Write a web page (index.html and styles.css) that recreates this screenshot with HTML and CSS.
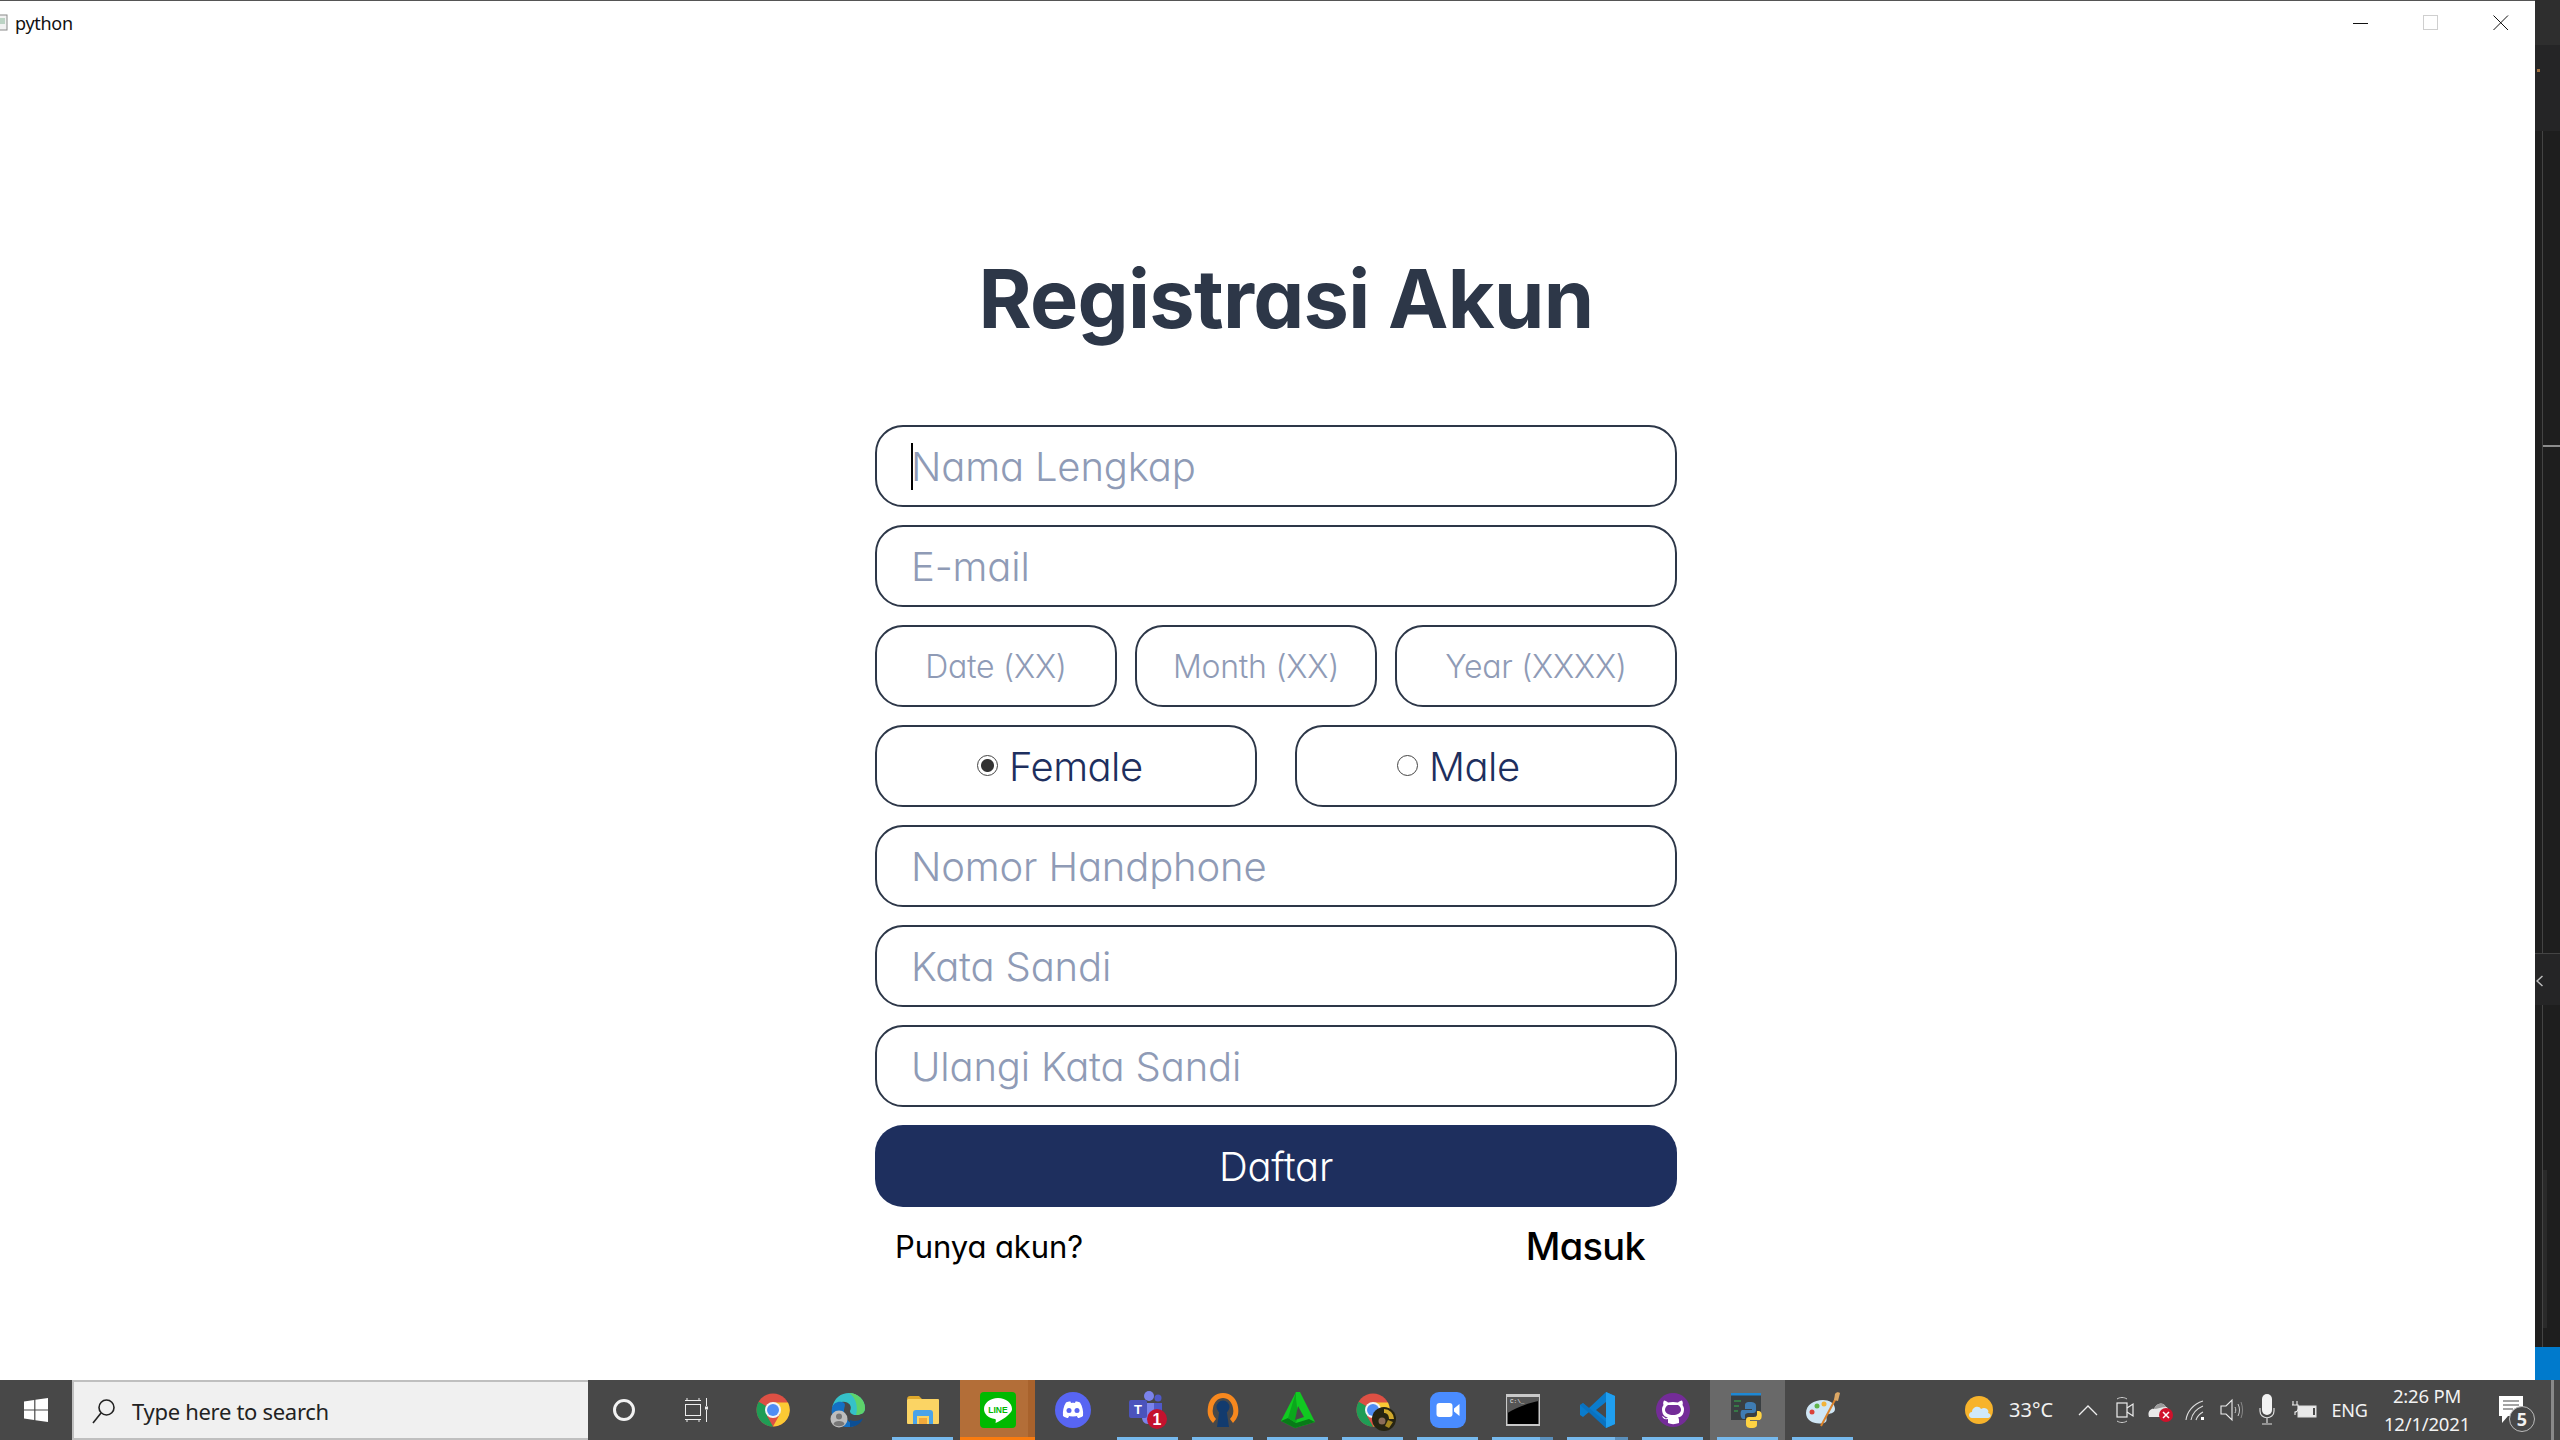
FILE: index.html
```html
<!DOCTYPE html>
<html lang="id">
<head>
<meta charset="utf-8">
<title>Registrasi Akun</title>
<link rel="stylesheet" href="styles.css">
</head>
<body>
<svg class="defs" width="0" height="0" aria-hidden="true">
  <defs>
    <symbol id="chrome" viewBox="0 0 36 36">
      <circle cx="18" cy="18" r="16.5" fill="#dd5044"/>
      <path d="M18 18 L6.5 29.8 A16.5 16.5 0 0 1 3.7 9.8 L18 18Z M3.7 9.8 L12 24 L18 34.5 A16.5 16.5 0 0 1 3.7 9.8Z" fill="#1f9d55"/>
      <path d="M18 10.5 H33 A16.5 16.5 0 0 1 18 34.5 L25 22Z" fill="#fbc934"/>
      <circle cx="18" cy="18" r="8" fill="#f4f4f4"/>
      <circle cx="18" cy="18" r="6" fill="#4f8df5"/>
    </symbol>
  </defs>
</svg>
<div class="screen">
  <div class="desktop">
    <main class="window">
      <header class="titlebar">
        <span class="app">
          <svg class="app-icon" width="8" height="18" viewBox="0 0 8 18"><rect x="-6" y="1" width="13" height="15" fill="#f2f2f2" stroke="#8a8a8a"/><rect x="0" y="4" width="5" height="6" fill="#bcd3c4"/></svg>
          <span class="app-name">python</span>
        </span>
        <span class="controls">
          <svg width="16" height="16" viewBox="0 0 16 16"><path d="M0 8.5H15" stroke="#111" stroke-width="1"/></svg>
          <svg width="16" height="16" viewBox="0 0 16 16"><rect x="0.5" y="0.5" width="14" height="14" fill="none" stroke="#cfcfcf"/></svg>
          <svg width="16" height="16" viewBox="0 0 16 16"><path d="M0.5 0.5L15 15M15 0.5L0.5 15" stroke="#111" stroke-width="1"/></svg>
        </span>
      </header>
      <section class="content">
        <h1 class="heading">Registrasi Akun</h1>
        <form class="form">
          <div class="with-caret">
            <input class="field" type="text" placeholder="Nama Lengkap">
            <span class="caret"></span>
          </div>
          <input class="field" type="text" placeholder="E-mail">
          <div class="row">
            <input class="field small date" type="text" placeholder="Date (XX)">
            <input class="field small date" type="text" placeholder="Month (XX)">
            <input class="field small year" type="text" placeholder="Year (XXXX)">
          </div>
          <div class="row gender">
            <label class="choice"><input class="radio" type="radio" name="g" checked>Female</label>
            <label class="choice"><input class="radio" type="radio" name="g">Male</label>
          </div>
          <input class="field" type="text" placeholder="Nomor Handphone">
          <input class="field" type="password" placeholder="Kata Sandi">
          <input class="field" type="password" placeholder="Ulangi Kata Sandi">
          <button class="submit" type="button">Daftar</button>
          <div class="foot">
            <span class="foot-q">Punya akun?</span>
            <a class="foot-link">Masuk</a>
          </div>
        </form>
      </section>
    </main>
    <aside class="editor">
      <div class="ed-title"></div>
      <div class="ed-tabs"><span class="dot"></span></div>
      <div class="ed-pane1"><div class="ed-split"></div></div>
      <div class="ed-bar"><svg width="7" height="14" viewBox="0 0 7 14"><path d="M6.500 2L1 7L6.500 12" fill="none" stroke="#bdbdbd" stroke-width="1.500"/></svg></div>
      <div class="ed-pane2"><div class="ed-thumb"></div></div>
      <div class="ed-status"></div>
    </aside>
  </div>
  <footer class="taskbar">
    <div class="start">
      <svg width="24" height="24" viewBox="0 0 24 24"><path d="M0 3.4L10.2 2V11.4H0ZM11.4 1.8L24 0V11.4H11.4ZM0 12.6H10.2V22L0 20.6ZM11.4 12.6H24V24L11.4 22.2Z" fill="#fff"/></svg>
    </div>
    <div class="search">
      <svg width="24" height="26" viewBox="0 0 24 26"><circle cx="14.5" cy="9.5" r="7.5" fill="none" stroke="#222" stroke-width="1.6"/><path d="M9 15L1 25" stroke="#222" stroke-width="1.6"/></svg>
      <span class="search-text">Type here to search</span>
    </div>
    <div class="cell sys">
      <svg width="24" height="24" viewBox="0 0 24 24"><circle cx="12" cy="12" r="9.5" fill="none" stroke="#f2f2f2" stroke-width="3"/></svg>
    </div>
    <div class="cell sys narrow">
      <svg width="24" height="26" viewBox="0 0 24 26"><path d="M1 3.5H17M3 1V3.5M15 1V3.5M1 22.5H17M3 25V22.5M15 25V22.5" stroke="#eee" fill="none"/><rect x="1.5" y="7.5" width="15" height="11" fill="none" stroke="#eee"/><path d="M22.5 1V9M22.5 13V25" stroke="#eee"/><rect x="21" y="9.5" width="3" height="3" fill="#eee"/></svg>
    </div>

    <div class="cell"><svg class="ic"><use href="#chrome"/></svg></div>

    <div class="cell"><svg class="ic" viewBox="0 0 36 36">
      <path d="M2 16C4 6 11 1 19 1C28 1 35 8 35 16C35 21 31 23 26 23C22 23 20 21 20 19C23 14 18 9 12 10C7 11 3 13 2 16Z" fill="#35c1c9"/>
      <path d="M19 1C28 1 35 8 35 16C35 21 31 23 26 23C28 17 27 6 19 1Z" fill="#5ed36a"/>
      <path d="M2 16C3 11 8 9 12 10C17 11 14 15 14 19C14 26 20 33 27 32C24 35 20 35 18 35C8 35 0 27 2 16Z" fill="#1470c4"/>
      <path d="M20 28C24 30 30 29 33 26C31 31 28 34 20 35Z" fill="#0c4f95"/>
      <circle cx="9" cy="27" r="8.5" fill="#bdbdbd"/><circle cx="9" cy="24.5" r="3" fill="#777"/><path d="M3.5 32C4 28 14 28 14.5 32C12 35 6 35 3.5 32Z" fill="#777"/>
    </svg></div>

    <div class="cell"><svg class="ic" viewBox="0 0 36 36">
      <path d="M2 8C2 5 3 4 5 4H14L17 7H2Z" fill="#e0a92b"/>
      <rect x="2" y="7" width="32" height="25" rx="1" fill="#fbd464"/>
      <path d="M8 32V21C8 19 9 18 11 18H25C27 18 28 19 28 21V32H24V24H12V32Z" fill="#4aa3e8"/>
      <rect x="14" y="26" width="8" height="6" fill="#f2a93b"/>
    </svg><i class="mark"></i></div>

    <div class="cell line"><svg class="ic" viewBox="0 0 36 36">
      <rect width="36" height="36" rx="4" fill="#00b900"/>
      <path d="M18 6C10 6 4 11 4 17C4 22 8 26 15 27C16 27 16 29 15.5 31C20 29 27 25 30 21C31.5 19.5 32 18.5 32 17C32 11 26 6 18 6Z" fill="#fff"/>
      <text class="line-word" x="18" y="21" text-anchor="middle">LINE</text>
    </svg><i class="mark-line"></i></div>

    <div class="cell"><svg class="ic" viewBox="0 0 36 36">
      <circle cx="18" cy="18" r="18" fill="#5865f2"/>
      <path d="M11 10.5C13 9.5 15 9.2 15.5 9.5L16 11C17.5 10.8 18.5 10.8 20 11L20.5 9.5C21 9.2 23 9.5 25 10.5C27.5 14.5 28.5 19 28 24C26 25.5 24 26 23 26L21.8 24C22.5 23.8 23.5 23.3 24 23C20 25 16 25 12 23C12.5 23.3 13.5 23.8 14.2 24L13 26C12 26 10 25.5 8 24C7.5 19 8.5 14.5 11 10.5Z" fill="#fff"/>
      <circle cx="14" cy="18.5" r="2.5" fill="#5865f2"/><circle cx="22" cy="18.5" r="2.5" fill="#5865f2"/>
    </svg></div>

    <div class="cell"><svg class="ic tall" viewBox="0 0 40 40">
      <circle cx="21" cy="6" r="5" fill="#7b83eb"/><circle cx="30" cy="8" r="3.5" fill="#5059c9"/>
      <path d="M14 13H26V27C26 32 22 34 20 34C16 34 14 31 14 27Z" fill="#7b83eb"/>
      <path d="M26 13H34V24C34 28 30 29 26 28Z" fill="#5059c9"/>
      <rect x="1" y="10" width="18" height="18" rx="2" fill="#4b53bc"/>
      <text class="teams-t" x="10" y="24" text-anchor="middle">T</text>
      <circle cx="29" cy="29" r="10" fill="#c4122e"/>
      <text class="teams-n" x="29" y="35" text-anchor="middle">1</text>
    </svg><i class="mark"></i></div>

    <div class="cell"><svg class="ic" viewBox="0 0 36 36">
      <path d="M8 31C3 26 2 21 3 15C4 7 10 1 18 1C26 1 32 7 33 15C34 21 33 26 28 31L25 27C28 24 29 20 28 16C27 10 23 6 18 6C13 6 9 10 8 16C7 20 8 24 11 27Z" fill="#f7881e"/>
      <circle cx="18" cy="15" r="6.5" fill="#123b6e"/><path d="M14.5 18H21.5L24 35H12Z" fill="#123b6e"/>
    </svg><i class="mark"></i></div>

    <div class="cell"><svg class="ic" viewBox="0 0 36 36">
      <path d="M16 0L20 0L35 30L15 36L1 29Z" fill="#11c921"/>
      <path d="M1 29L15 36L35 30L29 27L16 31L8 26Z" fill="#087a18"/>
      <path d="M16 0L8 26L16 31L18 23L16 7Z" fill="#0aa81c"/>
      <path d="M18 14L24 25L15 28Z" fill="#484848"/>
    </svg><i class="mark"></i></div>

    <div class="cell"><svg class="ic"><use href="#chrome"/></svg><svg class="ic-over" width="24" height="24" viewBox="0 0 24 24"><circle cx="12" cy="12" r="12" fill="#262412"/><path d="M12 2A10 10 0 0 1 22 12H17C17 8 15 6 12 6Z" fill="#d1a92c"/><path d="M21 15L17 21L13 19L16 13Z" fill="#a58821"/><circle cx="10" cy="14" r="3.5" fill="#8a6c58"/></svg><i class="mark"></i></div>

    <div class="cell"><svg class="ic" viewBox="0 0 36 36">
      <rect width="36" height="36" rx="9" fill="#4a8cff"/>
      <rect x="6.5" y="11" width="16" height="14" rx="3" fill="#fff"/>
      <path d="M24 16.5L29.5 12V24L24 19.5Z" fill="#fff"/>
    </svg><i class="mark"></i></div>

    <div class="cell"><svg class="ic" viewBox="0 0 36 36">
      <rect x="1" y="2" width="34" height="32" fill="#c9c9c9"/>
      <rect x="2.5" y="5" width="31" height="27" fill="#000"/>
      <path d="M2.5 5H33.5V9C24 11 12 15 2.5 21Z" fill="#555"/>
      <text class="cmd-word" x="5" y="11">C:\_</text>
    </svg><i class="mark split"></i></div>

    <div class="cell"><svg class="ic" viewBox="0 0 36 36">
      <path d="M26 0L35 4V32L26 36L9 20L3 25L0 23V13L3 11L9 16Z" fill="#0a7ccd"/>
      <path d="M26 0L35 4V32L26 36Z" fill="#1f9ff0"/>
      <path d="M26 10L16 18L26 26Z" fill="#484848"/>
      <path d="M3 11L26 30V36L0 13Z" fill="#0a6cb8" opacity=".6"/>
    </svg><i class="mark split"></i></div>

    <div class="cell"><svg class="ic" viewBox="0 0 36 36">
      <circle cx="18" cy="18" r="17" fill="#742c98"/>
      <path d="M13 31V27C9 28 8 26 7 24C8 24 9 25 10 26C11 27 12 26 13 25.5C10 25 7 23 7 17C7 15 8 14 8.5 13C8 12 8 10 9 8.5C10.5 8.5 12 9.5 13 10.5C16 9.7 20 9.7 23 10.5C24 9.5 25.5 8.5 27 8.5C28 10 28 12 27.5 13C28 14 29 15 29 17C29 23 26 25 23 25.5C24 26.5 24 27.5 24 29V31C20 32.5 16 32.5 13 31Z" fill="#fff"/>
      <path d="M13 13H23C25 14 26 16 26 18C26 21 22 23 18 23C14 23 10 21 10 18C10 16 11 14 13 13Z" fill="#742c98"/>
    </svg><i class="mark"></i></div>

    <div class="cell active"><svg class="ic" viewBox="0 0 36 36">
      <rect x="1" y="1" width="30" height="27" fill="#3a3f42"/>
      <rect x="1" y="1" width="30" height="2.5" fill="#1e88d4"/>
      <path d="M4 9H11M4 14H9M4 19H8" stroke="#35b24d" stroke-width="1"/>
      <path d="M20 10C15 10 15 12 15 14V17H22V18H12C10 18 10 27 13 27H15V24C15 21 17 21 20 21H23C25 21 26 20 26 18V14C26 11 24 10 20 10Z" fill="#3f7cb3"/>
      <path d="M21 36C27 36 27 34 27 32V29H20V28H30C32 28 33 19 29 19H27V22C27 25 25 25 22 25H19C17 25 16 26 16 28V32C16 35 18 36 21 36Z" fill="#ffd343"/>
    </svg><i class="mark"></i></div>

    <div class="cell"><svg class="ic" viewBox="0 0 36 36">
      <path d="M1 21C1 13 9 8 18 8C24 8 30 11 30 17C30 22 24 21 22 23C20 25 24 29 19 31C10 33 1 29 1 21Z" fill="#cfe6f5"/>
      <circle cx="7" cy="20" r="2.5" fill="#d9423a"/><circle cx="12" cy="14" r="2.5" fill="#5fb44a"/><circle cx="19" cy="12" r="2.5" fill="#f2b33a"/>
      <path d="M16 34L31 6" stroke="#d9822b" stroke-width="2"/>
      <path d="M29 8L30 2C31 0 34 0 35 1L33 9Z" fill="#dca764"/>
    </svg><i class="mark"></i></div>

    <div class="tray">
      <span class="t-item w-weather"><svg width="30" height="30" viewBox="0 0 30 30"><circle cx="15" cy="15" r="14" fill="#f7b32b"/><path d="M8 23C4 23 4 17 8 17C8 12 15 10 17 14C21 11 26 15 24 18C28 19 27 23 24 23Z" fill="#cfe9fb"/></svg></span>
      <span class="t-item w-temp">33°C</span>
      <span class="t-item w-chev"><svg width="20" height="12" viewBox="0 0 20 12"><path d="M1 11L10 2L19 11" fill="none" stroke="#eee" stroke-width="1.3"/></svg></span>
      <span class="t-item w-std"><svg width="18" height="28" viewBox="0 0 18 28"><rect x="1" y="7" width="10" height="14" fill="none" stroke="#eee" stroke-width="1.2"/><path d="M11 12L17 8V20L11 16" fill="none" stroke="#eee" stroke-width="1.2"/><path d="M1 3C4 1 8 1 11 3M1 25C4 27 8 27 11 25" fill="none" stroke="#ccc"/></svg></span>
      <span class="t-item w-std"><svg width="26" height="24" viewBox="0 0 26 24"><path d="M1 19C-1 14 3 10 6 11C8 5 15 3 18 9C20 9 21 12 20 19Z" fill="#e8e8e8"/><path d="M6 11C8 5 15 3 18 9C14 9 9 11 6 11Z" fill="#9a9a9a"/><circle cx="18" cy="17" r="7" fill="#d0112b"/><path d="M15 14L21 20M21 14L15 20" stroke="#fff" stroke-width="1.5"/></svg></span>
      <span class="t-item w-std"><svg width="26" height="24" viewBox="0 0 26 24"><path d="M2 22C3 14 9 6 19 3M7 22C8 16 12 11 19 8M12 22C13 19 15 16 19 14" fill="none" stroke="#ddd" stroke-width="1.1"/><rect x="17" y="19" width="3" height="3" fill="#fff"/></svg></span>
      <span class="t-item w-vol"><svg width="24" height="24" viewBox="0 0 24 24"><path d="M1 8H6L12 2V22L6 16H1Z" fill="none" stroke="#eee" stroke-width="1.1"/><path d="M15 9C16 11 16 13 15 15M18 6C20 10 20 14 18 18" fill="none" stroke="#ccc"/><path d="M21 4C23 9 23 15 21 20" fill="none" stroke="#888"/></svg></span>
      <span class="t-item w-std"><svg width="16" height="32" viewBox="0 0 16 32"><rect x="3" y="0" width="10" height="21" rx="5" fill="#f2f2f2"/><path d="M1 14V17C1 26 15 26 15 17V14M8 24V29M3 30H13" fill="none" stroke="#ddd" stroke-width="1.2"/></svg></span>
      <span class="t-item w-bat"><svg width="26" height="18" viewBox="0 0 26 18"><rect x="7" y="5" width="18" height="11" fill="#e9e9e9" stroke="#ddd"/><rect x="22" y="7" width="2" height="7" fill="#484848"/><path d="M2 0V4M6 0V4M1 4H7V8C7 10 5 11 4 11V14" fill="#484848" stroke="#eee" stroke-width="1.1"/></svg></span>
      <span class="t-item w-eng">ENG</span>
      <span class="t-item w-clock"><span>2:26 PM</span><span>12/1/2021</span></span>
      <span class="t-item w-notif">
        <svg width="24" height="28" viewBox="0 0 24 28"><path d="M0 0H24V20H9L3 27V20H0Z" fill="#fff"/><path d="M4 5H20M4 9H20M4 13H14" stroke="#484848" stroke-width="1.2"/></svg>
        <span class="badge">5</span>
      </span>
      <span class="t-edge"></span>
    </div>
  </footer>
</div>
</body>
</html>
```
FILE: styles.css
```css
* { box-sizing: border-box; }
html, body { margin: 0; padding: 0; height: 100%; }
body { overflow: hidden; background: #1e1e1e; font-family: "Inter", "Noto Sans", sans-serif; }
.defs { position: absolute; }
.screen { height: 1440px; display: flex; flex-direction: column; }
.desktop { height: 1380px; display: flex; }

/* window */
.window { width: 2535px; background: #fff; border-top: 1px solid #555; display: flex; flex-direction: column; }
.titlebar { height: 44px; display: flex; align-items: center; justify-content: space-between; }
.app { display: flex; align-items: center; gap: 7px; }
.app-name { font: 18px/1 "Noto Sans", sans-serif; color: #111; letter-spacing: -0.3px; }
.controls { display: flex; gap: 54px; padding-right: 26px; }

.content { flex: 1; padding: 199px 0 0 875px; }
.heading { width: 802px; height: 110px; margin: 0 0 71px 10px; line-height: 110px; text-align: center; white-space: nowrap; font-size: 81px; font-weight: 700; color: #2d3748; letter-spacing: -0.7px; font-feature-settings: "cv11"; }
.form { width: 802px; display: flex; flex-direction: column; gap: 18px; }
.field { display: block; width: 100%; height: 82px; padding: 0 34px; border: 2.5px solid #2d3748; border-radius: 28px; background: #fff; outline: none; font-family: inherit; font-size: 40px; font-weight: 300; letter-spacing: -0.15px; color: #1e2f5e; font-feature-settings: "cv11"; }
.field::placeholder { color: #8f9bb6; opacity: 1; }
.small { font-size: 32px; padding: 0; text-align: center; letter-spacing: -0.25px; }
.date { flex: 0 0 242px; width: 242px; }
.year { flex: 1; width: auto; min-width: 0; }
.with-caret { position: relative; }
.caret { position: absolute; left: 36px; top: 18px; width: 2px; height: 47px; background: #000; }
.row { display: flex; gap: 18px; }
.gender { gap: 38px; }
.choice { flex: 1; height: 82px; display: flex; align-items: center; gap: 11px; padding-left: 100px; border: 2.5px solid #2d3748; border-radius: 28px; font-size: 40px; font-weight: 350; color: #1e2f5e; letter-spacing: -0.5px; font-feature-settings: "cv11"; }
.radio { appearance: none; margin: 0 0 2px; width: 21px; height: 21px; border: 1px solid #444; border-radius: 50%; background: #fff; }
.radio:checked { background: radial-gradient(circle, #333 0 6px, #fff 7px); }
.submit { height: 82px; border: 0; border-radius: 28px; background: #1e2f5e; color: #fff; font-family: inherit; font-size: 40px; font-weight: 350; letter-spacing: -0.3px; font-feature-settings: "cv11"; }
.foot { display: flex; justify-content: space-between; align-items: center; padding: 0 32px 0 20px; height: 42px; color: #000; }
.foot-q { font-size: 31px; font-weight: 400; letter-spacing: -0.1px; font-feature-settings: "cv11"; }
.foot-link { font-size: 38px; font-weight: 450; letter-spacing: -0.7px; font-feature-settings: "cv11"; }

/* editor strip behind the window */
.editor { flex: 1; display: flex; flex-direction: column; background: #1e1e1e; }
.ed-title { height: 45px; background: #2e2e2e; }
.ed-tabs { height: 86px; background: #252526; padding-top: 24px; }
.dot { display: block; width: 3px; height: 3px; background: #a0703f; margin-left: 2px; }
.ed-pane1 { flex: 0 0 822px; margin-left: 7px; border-left: 1px solid #444; padding-top: 314px; }
.ed-split { height: 2px; background: #8c8c8c; }
.ed-bar { flex: 0 0 52px; background: #252526; border-top: 1px solid #444; padding: 18px 0 0 1px; }
.ed-pane2 { flex: 1; margin-left: 7px; border-left: 1px solid #444; padding-top: 165px; min-height: 0; }
.ed-thumb { height: 158px; width: 4px; background: #2a2a2a; }
.ed-status { height: 33px; background: #007acc; }

/* taskbar */
.taskbar { height: 60px; display: flex; background: #484848; }
.start { flex: 0 0 72px; display: flex; align-items: center; justify-content: center; }
.search { flex: 0 0 516px; display: flex; align-items: center; gap: 16px; padding: 2px 0 0 18px; background: #f0f0f0; border: 2px solid #bfbfbf; border-right: 0; }
.search-text { font: 22px/1 "Noto Sans", sans-serif; color: #222; letter-spacing: -0.3px; }
.cell { position: relative; flex: 0 0 75px; display: flex; align-items: center; justify-content: center; }
.sys { flex-basis: 72px; }
.narrow { flex-basis: 75px; padding-right: 4px; }
.ic { width: 36px; height: 36px; }
.tall { width: 40px; height: 40px; }
.ic-over { position: absolute; left: 37px; top: 27px; }
.mark { position: absolute; left: 7px; right: 7px; bottom: 0; height: 3px; background: #76b9ed; }
.mark.split { background: linear-gradient(to right, #76b9ed 0 78%, #5a8fbb 78%); }
.line { background: linear-gradient(to right, #b36e38 0 91%, #a8622c 91%); }
.mark-line { position: absolute; left: 0; right: 0; bottom: 0; height: 3px; background: #f97b0f; }
.active { background: #696969; }
.line-word { font: 700 8.5px "Liberation Sans", sans-serif; fill: #00b900; }
.teams-t { font: 700 13px "Liberation Sans", sans-serif; fill: #fff; }
.teams-n { font: 700 16px "Liberation Sans", sans-serif; fill: #fff; }
.cmd-word { font: 6px "Liberation Mono", monospace; fill: #eee; }

.tray { flex: 1; display: flex; padding-left: 97px; color: #f2f2f2; font: 20px/1 "Noto Sans", sans-serif; }
.t-item { display: flex; align-items: center; justify-content: center; }
.w-weather { width: 44px; }
.w-temp { width: 67px; justify-content: flex-start; padding-left: 8px; }
.w-chev { width: 39px; }
.w-std { width: 36px; }
.w-vol { width: 34px; }
.w-bat { width: 38px; }
.w-eng { width: 53px; font-size: 18px; letter-spacing: -0.2px; }
.w-clock { width: 102px; flex-direction: column; gap: 10px; font-size: 18.5px; letter-spacing: -0.2px; }
.w-notif { position: relative; width: 66px; }
.badge { position: absolute; left: 31px; top: 26px; width: 26px; height: 26px; border-radius: 50%; border: 1px solid #bbb; background: #484848; display: flex; align-items: center; justify-content: center; font-size: 18px; font-weight: 700; }
.t-edge { width: 3px; background: #8a8a8a; margin-left: 7px; }
```
